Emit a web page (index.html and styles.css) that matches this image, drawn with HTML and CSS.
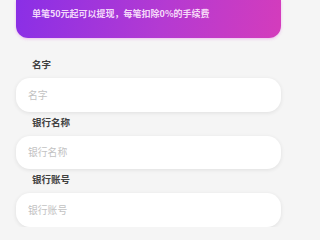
FILE: index.html
```html
<!DOCTYPE html>
<html lang="zh">
<head>
<meta charset="utf-8">
<link rel="stylesheet" href="styles.css">
</head>
<body>
<div class="page">
  <div class="banner">单笔50元起可以提现，每笔扣除0%的手续费</div>
  <div class="form">
    <div class="field">
      <div class="label">名字</div>
      <div class="input">名字</div>
    </div>
    <div class="field">
      <div class="label">银行名称</div>
      <div class="input">银行名称</div>
    </div>
    <div class="field">
      <div class="label">银行账号</div>
      <div class="input">银行账号</div>
    </div>
  </div>
</div>
</body>
</html>
```
FILE: styles.css
```css
html, body {
  margin: 0;
  padding: 0;
  background: #f5f5f5;
  font-family: "Noto Sans CJK SC", "Noto Sans", sans-serif;
}
.page {
  max-width: 297px;
  box-sizing: border-box;
  padding: 0 16px;
}
.banner {
  height: 38px;
  box-sizing: border-box;
  padding: 7px 16px 17px;
  line-height: 14px;
  font-size: 9px;
  font-weight: 700;
  color: rgba(255, 238, 255, 0.9);
  background: linear-gradient(100deg, #8a2fe6 0%, #b43ad2 55%, #d43cbc 100%);
  border-radius: 0 0 12px 12px;
  box-shadow: 0 1px 3px rgba(230, 120, 230, 0.45);
}
.form {
  margin-top: 16px;
}
.label {
  padding: 4px 0 8px 16px;
  line-height: 12px;
  font-size: 9.5px;
  font-weight: 700;
  color: #404040;
}
.input {
  height: 33.5px;
  box-sizing: border-box;
  padding-left: 12px;
  display: flex;
  align-items: center;
  font-size: 9.8px;
  color: #c2c2c2;
  background: #ffffff;
  border-radius: 14px;
  box-shadow: 0 1px 4px rgba(0, 0, 0, 0.09);
}
```
